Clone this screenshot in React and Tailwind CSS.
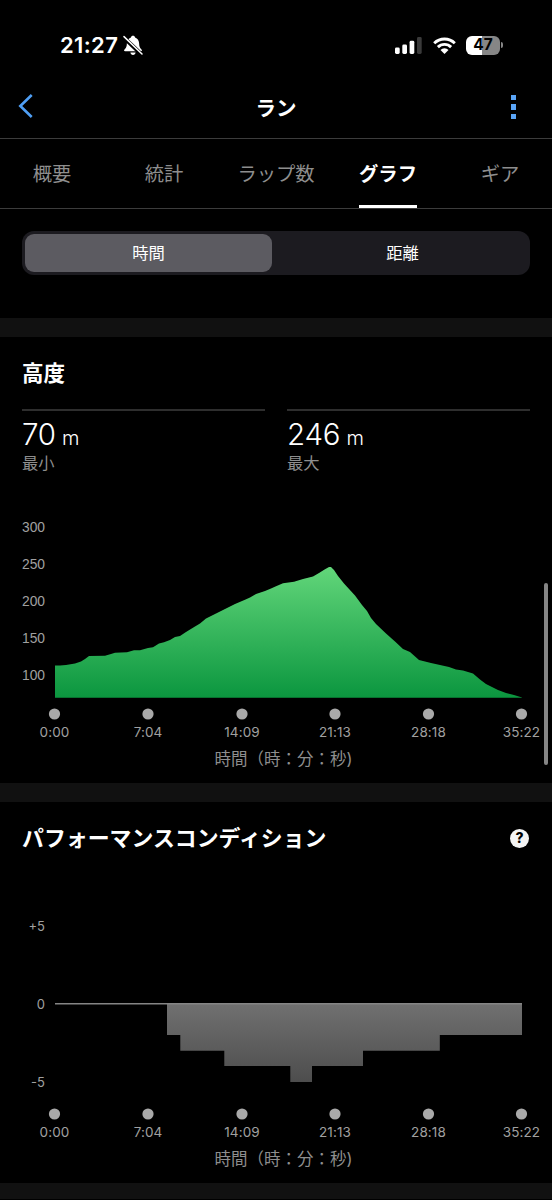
import { useState } from 'react';

const tabs = ['概要', '統計', 'ラップ数', 'グラフ', 'ギア'];

const ticks = [
  { x: 54.5, label: '0:00' },
  { x: 148, label: '7:04' },
  { x: 242, label: '14:09' },
  { x: 335, label: '21:13' },
  { x: 428.5, label: '28:18' },
  { x: 521.5, label: '35:22' }
];

const elevation = [
  [55, 165.5], [60, 165.6], [66, 165], [75, 163.5], [81, 161.5], [85, 159], [89, 156], [105, 155.7],
  [111, 154], [115, 152.8], [127, 152.3], [134, 150.2], [140, 150.2], [148, 148], [153, 147.3], [159, 143.5],
  [164, 142.3], [170, 140], [175, 137], [180, 136], [186, 132], [195, 126.5], [200, 123.5], [206, 118.5],
  [216, 113.5], [225, 109], [235, 104], [245, 99.7], [250, 97.5], [256, 94], [265, 91], [271, 88.5],
  [276, 86.2], [283, 83.3], [294, 81.7], [303, 79], [313, 76.5], [319, 73], [325, 69.2], [329, 67],
  [331, 67], [334, 70], [338, 76], [344, 83.5], [355, 95.5], [362, 105], [367, 111], [371, 118],
  [376, 124], [386, 133.5], [395, 141.5], [403, 149], [410, 152], [419, 160], [431, 163], [440, 165],
  [449, 167], [456, 169.5], [463, 170.5], [473, 173.5], [480, 179.5], [486, 184], [498, 190], [506, 193],
  [514, 195], [522, 197.5]
];

const elevationPoints = `55,197.7 ${elevation.map(p => p.join(',')).join(' ')} 522,197.7`;

function StatusBar() {
  return (
    <div className="h-[76px] pl-[60px] pr-[49px] pt-[14px] flex items-center justify-between">
      <div className="flex items-center gap-1">
        <span className="text-[22px] leading-none font-semibold w-[59px] tracking-[0.35px]">21:27</span>
        <svg width="20" height="21" viewBox="0 0 20 21">
          <path d="M10 .7c-1.1 0-1.9.7-2.1 1.7C5.300 3.300 4 5.500 3.900 8.200c-.1 3.400-.8 4.700-2.200 6-.9.8-.9 2 .4 2h15.800c1.300 0 1.300-1.200.4-2-1.400-1.300-2.100-2.600-2.200-6C16 5.500 14.700 3.300 12.100 2.400 11.900 1.400 11.100.7 10 .7z" fill="#fff" />
          <path d="M7.400 17.500h5.200c-.2 1.500-1.200 2.500-2.600 2.500s-2.400-1-2.600-2.500z" fill="#fff" />
          <path d="M.4 2.200l18.400 17.500" stroke="#000" strokeWidth="4" />
          <path d="M1 1.600l18 17.400" stroke="#fff" strokeWidth="1.500" strokeLinecap="round" />
        </svg>
      </div>
      <div className="flex items-center">
        <svg width="27" height="17" viewBox="0 0 27 17" className="mr-[11px]">
          <rect x="0" y="10.500" width="4.700" height="6.500" rx="1.400" fill="#fff" />
          <rect x="7.300" y="7.500" width="4.700" height="9.500" rx="1.400" fill="#fff" />
          <rect x="14.600" y="3.800" width="4.700" height="13.200" rx="1.400" fill="#fff" />
          <rect x="22" y="0" width="4.700" height="17" rx="1.400" fill="#3a3a3a" />
        </svg>
        <svg width="23" height="17" viewBox="0 0 23 17" className="mr-[10px]">
          <g fill="none" stroke="#fff" strokeWidth="2.900">
            <path d="M1.200 6.200a14.700 14.700 0 0 1 20.600 0" />
            <path d="M4.900 10.100a9.400 9.400 0 0 1 13.200 0" />
          </g>
          <path d="M11.500 17l-4-4.100a5.700 5.700 0 0 1 8 0z" fill="#fff" />
        </svg>
        <div className="flex items-center gap-[1px]">
          <div className="w-[34px] h-[19px] rounded-[6px] flex items-center justify-center text-black text-[15.500px] leading-none font-bold bg-[linear-gradient(90deg,#fff_47%,#868686_47%)]">47</div>
          <div className="w-[2px] h-[6px] rounded-r-full bg-[#868686]" />
        </div>
      </div>
    </div>
  );
}

function TimeAxis({ y }) {
  return (
    <g fill="#a9a9a9" textAnchor="middle">
      {ticks.map(t => (
        <g key={t.label}>
          <circle cx={t.x} cy={y} r="5.600" />
          <text x={t.x} y={y + 23} fontSize="13.500" letterSpacing="0.100" fill="#a0a0a0">{t.label}</text>
        </g>
      ))}
      <text x="214.500" y={y + 51} textAnchor="start" fontSize="16.500" fill="#8e8e8e">時間（時：分：秒)</text>
    </g>
  );
}

function Stat({ value, label }) {
  return (
    <div className="flex-1 border-t-2 border-[#2e2e2e] pt-[7px]">
      <p className="text-[29.500px] leading-[32px] font-[350] h-[34px] tracking-[-0.2px] whitespace-nowrap">
        {value} <span className="text-[20px] -ml-[2px]">m</span>
      </p>
      <p className="text-[16.300px] leading-[22px] text-[#8e8e8e]">{label}</p>
    </div>
  );
}

export default function App() {
  const [activeTab, setActiveTab] = useState('グラフ');
  const [mode, setMode] = useState('時間');

  return (
    <div className="relative w-[552px] h-[1200px] overflow-hidden bg-black text-white font-['Inter','Noto_Sans_CJK_JP',sans-serif]">
      <StatusBar />

      {/* Title bar */}
      <header className="h-[63px] px-[18px] flex items-center justify-between border-b border-[#3c3c3c]">
        <button className="w-10 pb-[3px]">
          <svg width="16" height="24" viewBox="0 0 16 24" fill="none" stroke="#4f9ff5" strokeWidth="2.600">
            <path d="M13.700 1L2.300 12l11.400 11" />
          </svg>
        </button>
        <h1 className="text-[20.500px] font-bold leading-none pt-[4px]">ラン</h1>
        <button className="w-10 flex flex-col items-end gap-1 pr-[18px]">
          <i className="w-[5.500px] h-[5.500px] bg-[#5aa5f7]" />
          <i className="w-[5.500px] h-[5.500px] bg-[#5aa5f7]" />
          <i className="w-[5.500px] h-[5.500px] bg-[#5aa5f7]" />
        </button>
      </header>

      {/* Tabs */}
      <nav className="h-[70px] -mx-1 flex border-b border-[#3c3c3c]">
        {tabs.map(tab => (
          <button
            key={tab}
            onClick={() => setActiveTab(tab)}
            className="flex-1 flex justify-center text-[19.300px] leading-[70px] whitespace-nowrap">
            <span className={tab === activeTab ? 'h-full border-b-[3px] border-white font-bold' : 'text-[#8e8e8e]'}>
              {tab}
            </span>
          </button>
        ))}
      </nav>

      {/* Time / distance switch */}
      <div className="px-[22px] pt-[22px] pb-[43px]">
        <div className="h-[44px] rounded-[12px] bg-[#1c1b20] p-[3px] grid grid-cols-[247px_1fr] text-[16.300px]">
          {['時間', '距離'].map(m => (
            <button
              key={m}
              onClick={() => setMode(m)}
              className={mode === m ? 'rounded-[9px] bg-[#5c5b61]' : 'rounded-[9px] pl-[6px]'}>
              {m}
            </button>
          ))}
        </div>
      </div>

      {/* Elevation */}
      <section className="h-[465px] border-t-[19px] border-[#111]">
        <h2 className="px-[22px] pt-[22px] text-[21.500px] leading-[28px] font-bold">高度</h2>
        <div className="px-[22px] pt-[22px] flex gap-[22px]">
          <Stat value="70" label="最小" />
          <Stat value="246" label="最大" />
        </div>
        <svg width="552" height="280" viewBox="0 0 552 280" className="mt-[26px]">
          <defs>
            <linearGradient id="green" x1="0" y1="0" x2="0" y2="1">
              <stop offset="0" stopColor="#62d67a" />
              <stop offset="1" stopColor="#0b963f" />
            </linearGradient>
          </defs>
          {[300, 250, 200, 150, 100].map((v, i) => (
            <text key={v} x="45" y={31.500 + i * 37} textAnchor="end" fontSize="13.800" fill="#a0a0a0" className="font-['Liberation_Sans',sans-serif]">{v}</text>
          ))}
          <polygon points={elevationPoints} fill="url(#green)" />
          <TimeAxis y={214} />
        </svg>
      </section>

      {/* Performance condition */}
      <section className="h-[400px] border-t-[19px] border-[#111]">
        <div className="h-[72px] px-[22px] flex items-center justify-between">
          <h2 className="text-[21.900px] leading-none font-bold pt-[2px]">パフォーマンスコンディション</h2>
          <span className="w-[19px] h-[19px] mr-[1px] rounded-full bg-[#f4f4f4] text-black text-[14px] leading-none font-extrabold flex items-center justify-center">?</span>
        </div>
        <svg width="552" height="300" viewBox="0 0 552 300">
          <defs>
            <linearGradient id="gray" x1="0" y1="0" x2="0" y2="1">
              <stop offset="0" stopColor="#707070" />
              <stop offset="1" stopColor="#4d4d4d" />
            </linearGradient>
          </defs>
          <g fill="#a0a0a0" fontSize="13" textAnchor="end">
            <text x="45" y="57">+5</text>
            <text x="45" y="134.500">0</text>
            <text x="45" y="212.500">-5</text>
          </g>
          <path d="M167 130V161H180.300V176.700H224.300V192H290.300V208H312V192H363V176.700H439.800V161H522V130z" fill="url(#gray)" />
          <path d="M55 129.700H522" stroke="#858585" strokeWidth="1.600" />
          <TimeAxis y={240} />
        </svg>
      </section>

      <div className="h-4 bg-[#111]" />

      {/* Scroll indicator */}
      <div className="absolute right-1 top-[583px] w-1 h-[182px] rounded-full bg-[#858585]" />
    </div>
  );
}
